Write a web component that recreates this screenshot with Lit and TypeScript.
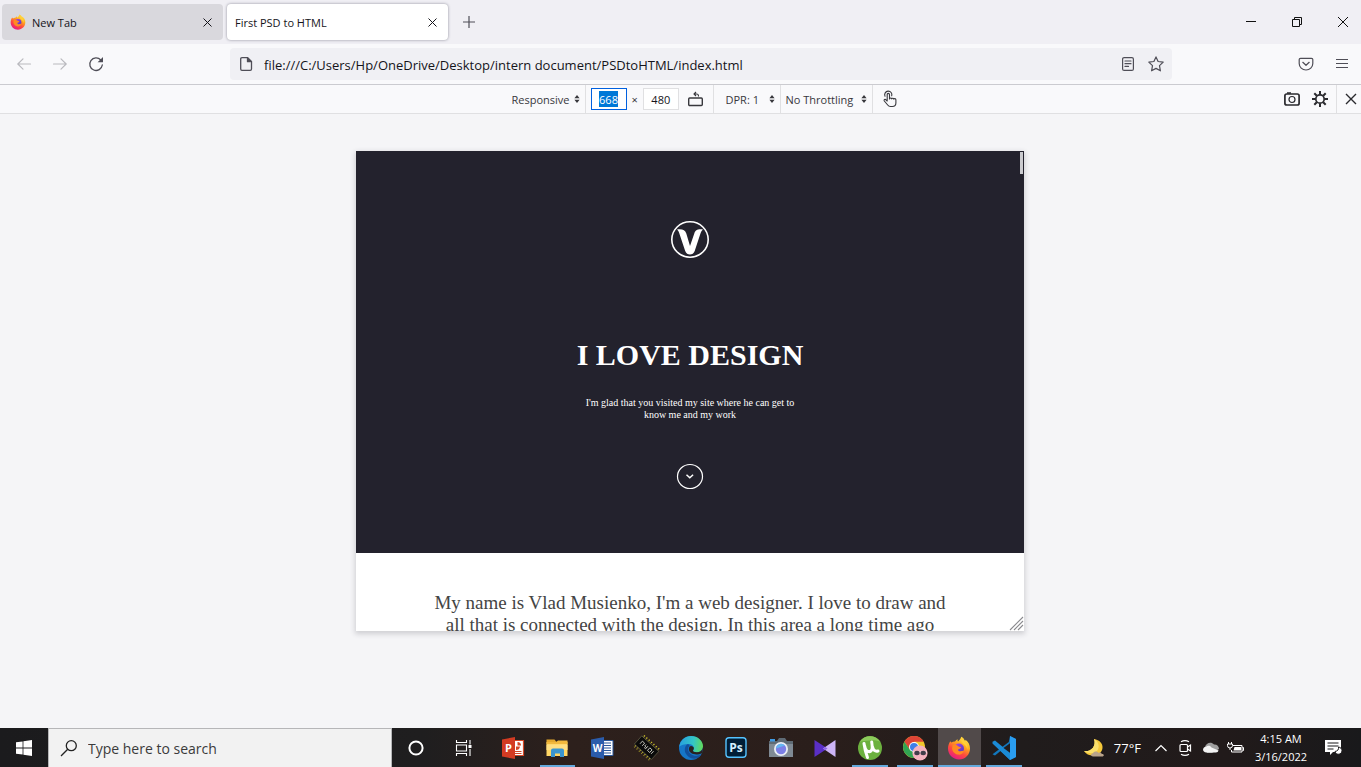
import { LitElement, html, css, svg } from "lit";
import { customElement } from "lit/decorators.js";
import { classMap } from "lit/directives/class-map.js";

const closeIcon = html`<svg width="9" height="9" viewBox="0 0 9 9" fill="none" stroke="currentColor" stroke-width="1" aria-hidden="true"><path d="M.5.5l8 8M8.500.5l-8 8"/></svg>`;
const arrows = html`<svg class="arrows" width="6" height="8" viewBox="0 0 6 8" fill="currentColor" aria-hidden="true"><path d="M3 0l2.600 3.200H.4zM3 8L.4 4.800h5.200z"/></svg>`;

const firefoxArt = svg`
  <defs>
    <linearGradient id="fx" x1=".8" y1="0" x2=".25" y2="1"><stop offset="0" stop-color="#fff14f"/><stop offset=".35" stop-color="#ffa91e"/><stop offset=".65" stop-color="#ff4a3d"/><stop offset="1" stop-color="#e3158c"/></linearGradient>
    <linearGradient id="fy" x1="0" y1="0" x2="1" y2="1"><stop offset="0" stop-color="#b043e8"/><stop offset="1" stop-color="#4b39b8"/></linearGradient>
  </defs>
  <path fill="url(#fx)" d="M3.2 5.2c.5.5.9 1 1.3 1.4C5.600 5.800 6.800 5.400 8 5.600 8.500 4.800 9.400 3.800 10.600 3.300 10.400 4.200 10.600 5 11 5.600 12.300 4.200 13.600 3 14.300.8c2 1.200 3 2.700 3.600 4.400.4-.3.6-.8.600-1.400C21.400 6 23 9 23 12.500 23 18.700 18.100 23.500 12 23.500S1 18.700 1 12.600C1 9.800 1.900 7.300 3.200 5.200z"/>
  <circle cx="12" cy="12.500" r="5" fill="url(#fy)"/>
  <path fill="#ff8a22" d="M5.600 9.300c1.600-1 3.900-.8 5.200.6.9.9 2.200.8 3.200 1-.2 1.500-1.700 1.800-2.700 2.300-.6.4-.2 1.600.9 2 2 .6 3.400-.8 4.600-.3-.7 2.500-3 4-5.500 3.700-3.500-.4-6-3.200-6.200-6.200z"/>
  <path fill="#ffcf3a" d="M14.300.8c2 1.200 3 2.700 3.600 4.400 2 2.300 3.100 5 2.500 8.500-.4-2.600-1.500-4.300-3.500-5.500-2.300-1.400-3.200-3.900-2.600-7.400z"/>`;

const apps = [
  { name: "PowerPoint", open: false, active: false, art: svg`
    <path fill="#fff" d="M12 4h11v16H12z"/><path fill="none" stroke="#d24726" stroke-width="1.200" d="M12 4.500h10.500v15H12"/><path fill="#d24726" d="M15 6.500v4h4a4 4 0 0 1-4 3.500zM16.500 6a3.500 3.500 0 0 1 3.500 3.500h-3.500zM14 15h6.500v1H14zM14 17h6.500v1H14z"/>
    <path fill="#d33b22" d="M1 3.500L14 1v22L1 20.500z"/><text x="7.500" y="16" text-anchor="middle" font-size="11" font-weight="700" fill="#fff">P</text>` },
  { name: "File Explorer", open: true, active: false, art: svg`
    <path fill="#e5a92e" d="M1.500 3.500h8l2 2.500h-10z"/><path fill="#ffd664" d="M1.500 6h21v14h-21z"/><path fill="#f2b93e" d="M1.500 6H11l2-1.500h9.500V8h-21z"/><path fill="#ffdf83" d="M1.500 8.500h21V14h-21z"/><path fill="#3a95cf" d="M6 21v-6.500q0-2 2-2h9q2 0 2 2V21h-4v-3.500h-5V21z"/>` },
  { name: "Word", open: false, active: false, art: svg`
    <path fill="#fff" stroke="#2b579a" stroke-width="1" d="M12 4.500h11v15H12z"/><path stroke="#2b579a" stroke-width="1.200" d="M14 7h7M14 9.500h7M14 12h7M14 14.500h7M14 17h7"/>
    <path fill="#2b5cab" d="M1 3.500L14 1v22L1 20.500z"/><text x="7.500" y="16" text-anchor="middle" font-size="10" font-weight="700" fill="#fff">W</text>` },
  { name: "Chip tool", open: false, active: false, art: svg`
    <g transform="rotate(42 12 12)"><path stroke="#c9c02a" stroke-width="1.200" stroke-dasharray="1.500 .7" d="M2 4v16M5.200 4v16M8.400 4v16M11.600 4v16M14.800 4v16M18 4v16M21.200 4v16"/><path fill="#0b0b0b" stroke="#6d6a50" stroke-width=".6" d="M0 6.500h23v11H0z"/><path fill="none" stroke="#c9c9c0" stroke-width=".9" d="M4 13.500V10h3v3.500M9 10v2h2.500M11.500 10v3.500H9.500M14 10h3v3.500h-3zM19 10v3.500"/></g>` },
  { name: "Edge", open: false, active: false, art: svg`
    <defs><linearGradient id="eg" x1="0" y1=".3" x2="1" y2=".4"><stop offset="0" stop-color="#279fe0"/><stop offset=".6" stop-color="#34c6c5"/><stop offset="1" stop-color="#61d95c"/></linearGradient></defs>
    <circle cx="12" cy="12" r="12" fill="#1676c8"/>
    <path fill="url(#eg)" d="M.2 11C1 4.600 6 0 12 0c7 0 12 5 12 10.300 0 3.500-2.700 6-6.200 6-2.800 0-4.200-1-3.700-2 .5-.8.8-1.500.7-2.600C14.600 9.400 12.400 8 9.600 8 5.500 8 1.500 9 .2 11z"/>
    <path fill="#12509d" d="M8.500 8.200C5.800 10 5 14 6.800 17.500c2 4 6.800 6.500 11.700 4.600 1.600-.7 3-2 4-3.500-4 2-9.500 1.400-12.300-2.200-1.700-2.300-1.500-5 .1-6.400.6-1-.4-2.100-1.800-1.800z"/>
    <path fill="#2a211f" d="M10.600 10.500c-1.500 2.200-.7 5 1.500 6.500 3.400 2.200 7.800 1.600 10.800.2l1.100 1.300-1 2.500L24 11c-.5 3.500-3 5.300-6.200 5.300-2.800 0-4.200-1-3.700-2 .5-.8.8-1.500.7-2.600-.6-1.500-3-2.400-4.200-1.200z"/>` },
  { name: "Photoshop", open: false, active: false, art: svg`
    <rect x="2" y="1.800" width="20" height="19.400" rx="3" fill="#001e36" stroke="#55c3ff" stroke-width="1.400"/><text x="12" y="16" text-anchor="middle" font-size="12" font-weight="700" fill="#d5efff">Ps</text>` },
  { name: "Camera", open: false, active: false, art: svg`
    <path fill="#5f6b75" d="M8 5l2-3h6l2 3h6v16H0V5z"/><path fill="#7f8a94" d="M0 8h24v13H0z"/><path fill="#3f9be4" d="M1 3h5v2.500H1z"/><circle cx="12" cy="13" r="7" fill="#e9eef5"/><circle cx="12" cy="13" r="5.200" fill="#7c7fe6"/><path fill="#65b7f1" d="M7 12.500a5.200 5.200 0 0 1 9-3z"/>` },
  { name: "Video editor", open: false, active: false, art: svg`
    <path fill="#5a2fc7" d="M1.500 4l13 8.500-13 8.500z"/><path fill="#cdb5f7" d="M22.500 4L10 12.500 22.500 21z"/><path fill="#8d63e6" d="M12.300 11l2.200 1.500-2.200 1.600-2.300-1.600z"/>` },
  { name: "Torrent client", open: true, active: false, art: svg`
    <circle cx="12" cy="12" r="12" fill="#6cb13f"/><path fill="#8ccb5b" d="M2 5.500A12 12 0 0 1 22 5.500C15 3 8 5 2 5.500z"/><path fill="none" stroke="#fff" stroke-width="3" stroke-linecap="round" d="M6 7.500c.5 4 2 10 3.500 14M6.500 9.500c.8 4.500 2.800 6.700 5.600 6 2.600-.8 2.600-3.800 1.600-9.500M14.600 11c.6 3 2.200 4.700 5.400 4"/>` },
  { name: "Chrome", open: true, active: false, art: svg`
    <circle cx="11" cy="11" r="11" fill="#f0c72c"/><path fill="#de4436" d="M1.400 5.700A11 11 0 0 1 20.700 5.800H11L6.600 13.600z"/><path fill="#31a452" d="M1.400 5.700A11 11 0 0 0 10.500 22l5-8.500-9-.2z"/><circle cx="11" cy="11" r="5" fill="#fff"/><circle cx="11" cy="11" r="4" fill="#3f7fe8"/>
    <circle cx="17" cy="17" r="7.600" fill="#f5b2bf"/><path fill="none" stroke="#fff" stroke-width=".8" d="M10 16h14"/><ellipse cx="14" cy="17" rx="2.700" ry="2.200" fill="#423d4a"/><ellipse cx="20.200" cy="17" rx="2.700" ry="2.200" fill="#423d4a"/>` },
  { name: "Firefox", open: true, active: true, art: firefoxArt },
  { name: "Visual Studio Code", open: true, active: false, art: svg`
    <path fill="#1277bd" d="M18 0l6 3v18l-6 3-9.500-9-5.500 4.500-2.500-1.300L16.800 6z"/><path fill="#2a9df0" d="M18 0l6 3v18l-6 3z"/><path fill="#1b8bd6" d="M.5 5.800L3 4.500 18 17v7L.5 7.500z"/><path fill="#211c1d" d="M18 7.200v9.600L11.500 12z"/>` },
];

@customElement("app-root")
export class AppRoot extends LitElement {
  static styles = css`
    :host { display: flex; flex-direction: column; min-height: 100vh; background: #f5f5f7; color: #15141a; font-family: "Open Sans", "Noto Sans", sans-serif; font-size: 12px; }
    * { box-sizing: border-box; }
    button, input, select { font: inherit; color: inherit; margin: 0; padding: 0; border: 0; background: none; border-radius: 0; }
    button { display: inline-flex; align-items: center; justify-content: center; flex: none; }
    svg { display: block; flex: none; overflow: visible; }
    .icon { color: #4f4e57; }

    .titlebar { display: flex; align-items: center; height: 44px; background: #f0eff4; padding-left: 2px; }
    .tab { display: flex; align-items: center; flex: 0 1 221px; height: 36px; padding: 0 7px 0 8px; border-radius: 4px; gap: 6px; background: #d9d8dd; margin-right: 4px; }
    .tab.current { background: #fff; box-shadow: 0 0 3px #8e8e9a; }
    .tab-name { flex: 1; white-space: nowrap; font-size: 11px; }
    .tab button, .new-tab { width: 18px; height: 20px; }
    .new-tab { margin-left: 8px; }
    .window-buttons { display: flex; margin-left: auto; }
    .window-buttons button { width: 46px; height: 44px; color: #111; }
    .window-buttons button:last-child { width: 36px; margin-left: 5px; }

    .navbar { display: flex; align-items: center; height: 41px; padding: 0 11px 0 14px; background: #f9f9fb; border-bottom: 1px solid #cbcbd0; }
    .history { display: flex; gap: 16px; flex: 0 0 216px; }
    .history button { width: 20px; height: 20px; }
    .history button:disabled { color: #b9b9be; }
    .address { display: flex; align-items: center; flex: 1; height: 32px; padding: 0 8px; background: #f0f0f4; border-radius: 4px; gap: 10px; }
    .address input { flex: 1; min-width: 0; outline: 0; font-size: 13px; padding-top: 2px; color: #15141a; }
    .address-tools { display: flex; gap: 12px; }
    .nav-tools { display: flex; gap: 20px; flex: 0 0 178px; justify-content: flex-end; }

    .device-bar { display: grid; grid-template-columns: calc(50% - 174px) auto 1fr; align-items: stretch; height: 29px; background: #f9f9fb; border-bottom: 1px solid #e0e0e2; font-size: 11px; color: #38383d; }
    .device-main { grid-column: 2; display: flex; align-items: stretch; }
    .cell { display: flex; align-items: center; padding: 0 5px; border-right: 1px solid #e0e0e2; }
    .cell.size { gap: 5px; width: 128px; }
    .cell.dpr { width: 67px; padding-left: 12px; justify-content: space-between; }
    .cell.network { width: 92px; justify-content: space-between; }
    .cell.touch { border: 0; width: 34px; justify-content: center; }
    .cell select { appearance: none; outline: 0; margin-right: 4px; }
    .size input { width: 36px; height: 22px; border: 1px solid #e0e0e2; text-align: center; background: #fff; outline: 0; color: #15141a; }
    .size .chosen { border: 1px solid #0060df; color: #fff; background: linear-gradient(#0078d7, #0078d7) center / 19px 16px no-repeat #fff; }
    .rotate { margin-left: 4px; }
    .device-tools { display: flex; align-items: center; justify-content: flex-end; color: #2a2a2e; }
    .device-tools button { width: 28px; height: 28px; }
    .device-tools button:last-child { border-left: 1px solid #e0e0e2; margin-left: 2px; padding-left: 4px; width: 25px; }

    .stage { flex: 1; display: flex; justify-content: center; align-items: flex-start; padding: 37px 0 37px 19px; }
    .viewport { position: relative; width: 668px; height: 480px; overflow: hidden; background: #fff; box-shadow: 0 2px 5px 1px #cfcfd3; font-family: "Liberation Serif", serif; }
    .hero { display: flex; flex-direction: column; align-items: center; height: 402px; padding-top: 69px; background: #23222d; color: #fff; text-align: center; }
    .hero h1 { margin: 78px 0 0; font-size: 30px; line-height: 36px; font-weight: 700; }
    .hero p { width: 220px; margin: 24px 0 0; font-size: 10px; line-height: 12px; }
    .down { margin-top: 42px; }
    .about { margin: 39px 76px 0; color: #444; font-size: 19px; line-height: 22px; font-weight: 400; text-align: center; }
    .thumb { position: absolute; top: 1px; right: 1px; width: 3px; height: 22px; background: #cbcbcf; }
    .grip { position: absolute; right: 1px; bottom: 1px; }

    .taskbar { display: flex; height: 39px; background: linear-gradient(90deg, #1b1b1d 0, #1f1e1f 31%, #2d201c 42%, #2a1e1b 60%, #201c1c 75%, #211a1a 90%, #19191b 100%); color: #fff; }
    .start { width: 48px; }
    .search { display: flex; align-items: center; gap: 11px; flex: 0 1 344px; padding: 0 12px; background: #f2f2f2; border: 1px solid #b6b6b8; border-bottom: 0; color: #222; }
    .search input { flex: 1; min-width: 0; font-size: 14px; outline: 0; }
    .search input::placeholder { color: #3b3b3b; opacity: 1; }
    .shell { width: 48px; }
    .apps { display: grid; grid-template-columns: repeat(12, 1fr); flex: 0 1 535px; margin-left: 3px; gap: 1px; }
    .app { position: relative; font-family: "Open Sans", sans-serif; }
    .app.active { background: #514a4a; }
    .app.open::after { content: ""; position: absolute; left: 4px; right: 4px; bottom: 0; height: 2px; background: #64a9dc; }
    .app.active::after { left: 0; right: 0; }
    .tray { display: flex; align-items: center; margin-left: auto; padding-right: 19px; }
    .weather { gap: 8px; font-size: 13px; margin-right: 14px; }
    .tray-icons { display: flex; align-items: center; gap: 8px; margin-right: 10px; }
    .clock { flex-direction: column; width: 54px; font-size: 11px; line-height: 18px; white-space: nowrap; margin-right: 17px; }
  `;

  render() {
    return html`
      <header class="titlebar">
        <div class="tab"><svg width="16" height="16" viewBox="0 0 24 24" aria-hidden="true">${firefoxArt}</svg><span class="tab-name">New Tab</span><button aria-label="Close New Tab">${closeIcon}</button></div>
        <div class="tab current"><span class="tab-name">First PSD to HTML</span><button aria-label="Close First PSD to HTML">${closeIcon}</button></div>
        <button class="new-tab icon" aria-label="New tab"><svg width="12" height="12" viewBox="0 0 12 12" stroke="currentColor" stroke-width="1.200"><path d="M6 0v12M0 6h12"/></svg></button>
        <div class="window-buttons">
          <button aria-label="Minimize"><svg width="10" height="10" viewBox="0 0 10 10" stroke="currentColor"><path d="M0 4.500h10"/></svg></button>
          <button aria-label="Restore"><svg width="10" height="10" viewBox="0 0 10 10" fill="none" stroke="currentColor"><path d="M.5 2.500h7v7h-7zM2.500 2.500v-2h7v7h-2"/></svg></button>
          <button aria-label="Close"><svg width="10" height="10" viewBox="0 0 10 10" stroke="currentColor"><path d="M0 0l10 10M10 0L0 10"/></svg></button>
        </div>
      </header>

      <nav class="navbar">
        <div class="history icon">
          <button disabled aria-label="Back"><svg width="14" height="12" viewBox="0 0 14 12" fill="none" stroke="currentColor" stroke-width="1.200" stroke-linecap="round"><path d="M13.500 6H1M6 .8L.8 6 6 11.200"/></svg></button>
          <button disabled aria-label="Forward"><svg width="14" height="12" viewBox="0 0 14 12" fill="none" stroke="currentColor" stroke-width="1.200" stroke-linecap="round"><path d="M.5 6H13M8 .8L13.200 6 8 11.200"/></svg></button>
          <button aria-label="Reload"><svg width="14" height="14" viewBox="0 0 14 14" fill="none" stroke="currentColor" stroke-width="1.300" stroke-linecap="round"><path d="M13.300 8A6.300 6.300 0 1 1 11.800 3"/><path fill="currentColor" stroke="none" d="M14 0v5.200H8.600z"/></svg></button>
        </div>
        <div class="address icon">
          <svg width="16" height="16" viewBox="0 0 16 16" fill="none" stroke="currentColor" stroke-width="1.300" stroke-linejoin="round"><path d="M4 1.700h5.500l4 4V13q0 1.300-1.300 1.300H4Q2.700 14.300 2.700 13V3Q2.700 1.700 4 1.700z"/><path fill="currentColor" d="M9.500 1.700v4h4z"/></svg>
          <input aria-label="Address" value="file:///C:/Users/Hp/OneDrive/Desktop/intern document/PSDtoHTML/index.html">
          <div class="address-tools">
            <button aria-label="Reader view"><svg width="16" height="16" viewBox="0 0 16 16" fill="none" stroke="currentColor" stroke-width="1.200" stroke-linecap="round"><rect x="2.600" y="1.600" width="10.800" height="12.800" rx="1.500"/><path d="M5 5h6M5 7.700h6M5 10.400h3.500"/></svg></button>
            <button aria-label="Bookmark"><svg width="16" height="16" viewBox="0 0 16 16" fill="none" stroke="currentColor" stroke-width="1.200" stroke-linejoin="round"><path d="M8 .9l2.100 4.600 5.100.6-3.700 3.500.9 5.200L8 12.400l-4.400 2.400.9-5.200L.8 6.100l5.100-.6z"/></svg></button>
          </div>
        </div>
        <div class="nav-tools icon">
          <button aria-label="Pocket"><svg width="16" height="16" viewBox="0 0 16 16" fill="none" stroke="currentColor" stroke-width="1.200" stroke-linecap="round" stroke-linejoin="round"><path d="M2.500 2.300h11q1.300 0 1.300 1.300v3.800a6.800 6.600 0 0 1-13.600 0V3.600q0-1.300 1.300-1.300zM4.800 6.300L8 9.300l3.200-3"/></svg></button>
          <button aria-label="Menu"><svg width="16" height="16" viewBox="0 0 16 16" stroke="currentColor" stroke-width="1"><path d="M2 3.500h12M2 7.500h12M2 11.500h12"/></svg></button>
        </div>
      </nav>

      <section class="device-bar" aria-label="Responsive design">
        <div class="device-main">
          <div class="cell"><select aria-label="Device"><option>Responsive</option></select>${arrows}</div>
          <div class="cell size">
            <input class="chosen" aria-label="Width" value="668"><span>×</span><input aria-label="Height" value="480">
            <button class="rotate" aria-label="Rotate"><svg width="15" height="14" viewBox="0 0 15 14" fill="none" stroke="currentColor" stroke-width="1.400"><rect x=".7" y="6" width="13.600" height="7.500" rx="1"/><path stroke-width="1.100" d="M10.500 4.500V4q0-2-2-2H6M8 0L6 2l2 2"/></svg></button>
          </div>
          <div class="cell dpr"><select aria-label="Device pixel ratio"><option>DPR: 1</option></select>${arrows}</div>
          <div class="cell network"><select aria-label="Network throttling"><option>No Throttling</option></select>${arrows}</div>
          <div class="cell touch"><button aria-label="Touch simulation"><svg width="14" height="16" viewBox="0 0 14 16" fill="none" stroke="currentColor" stroke-width="1.100" stroke-linejoin="round" stroke-linecap="round"><path d="M4.200 9.500V3.600q0-1.200 1.100-1.200t1.200 1.200V8q0-1 1-1t1.200 1q0-.8 1-.8t1.100 1q.1-.6 1-.6 1.100 0 1.100 1.200V12q0 3.500-3.600 3.500H7.500q-1.800 0-2.800-1.500L1.300 10q-.6-1 .2-1.500.8-.4 1.500.3l1.200 1.200M2 5.200A3.600 3.600 0 1 1 8.700 4.800"/></svg></button></div>
        </div>
        <div class="device-tools">
          <button aria-label="Screenshot"><svg width="16" height="14" viewBox="0 0 16 14" fill="none" stroke="currentColor" stroke-width="1.700"><rect x=".9" y="2" width="14.200" height="11" rx="1.800"/><path d="M3 1h4" stroke-width="1.500"/><circle cx="8" cy="7.500" r="3" stroke-width="1.200"/></svg></button>
          <button aria-label="Settings"><svg width="16" height="16" viewBox="0 0 16 16" fill="none" stroke="currentColor"><circle cx="8" cy="8" r="4.200" stroke-width="1.700"/><path stroke-width="2" d="M8 0v3.500M8 12.500V16M0 8h3.500M12.500 8H16M2.300 2.300l2.500 2.500M11.200 11.200l2.500 2.500M2.300 13.700l2.500-2.500M11.200 4.800l2.500-2.500"/></svg></button>
          <button aria-label="Close responsive design"><svg width="10" height="10" viewBox="0 0 10 10" stroke="currentColor" stroke-width="1.400"><path d="M0 0l10 10M10 0L0 10"/></svg></button>
        </div>
      </section>

      <main class="stage">
        <div class="viewport">
          <section class="hero">
            <svg width="40" height="39" viewBox="0 0 40 39" role="img" aria-label="V logo"><ellipse cx="20" cy="19.500" rx="18.200" ry="17.700" fill="none" stroke="#fff" stroke-width="1.600"/><path fill="#fff" d="M7 9.500C12.500 9 15 9.800 16.300 13.500L20 26l4.300-12.500C25.600 9.800 27.500 9 33 9.500c-1.600 1.400-2 2.600-2.700 4.600L24.700 31c-1.600 4.800-7.900 4.800-9.500 0L9.600 14.200C8.900 12.200 8.500 10.800 7 9.500z"/></svg>
            <h1>I LOVE DESIGN</h1>
            <p>I'm glad that you visited my site where he can get to know me and my work</p>
            <button class="down" aria-label="Scroll down"><svg width="28" height="27" viewBox="0 0 28 27" fill="none" stroke="#fff"><ellipse cx="14" cy="13.500" rx="12.500" ry="12" stroke-width="1.200"/><path stroke-width="1.500" d="M10.500 11.800l3.300 3 3.300-3"/></svg></button>
          </section>
          <p class="about">My name is Vlad Musienko, I'm a web designer. I love to draw and all that is connected with the design. In this area a long time ago</p>
          <div class="thumb"></div>
          <svg class="grip" width="13" height="13" viewBox="0 0 13 13" stroke="#8a8a8e" stroke-width="1.100"><path d="M0 13L13 0M4 13l9-9M8 13l5-5"/></svg>
        </div>
      </main>

      <footer class="taskbar">
        <button class="start" aria-label="Start"><svg width="16" height="16" viewBox="0 0 16 16" fill="#fff"><path d="M0 2.300L6.600 1.400v6.200H0zM7.400 1.300L16 0v7.600H7.400zM0 8.400h6.600v6.200L0 13.700zM7.400 8.400H16V16l-8.600-1.200z"/></svg></button>
        <label class="search"><svg width="16" height="16" viewBox="0 0 16 16" fill="none" stroke="currentColor" stroke-width="1.300"><circle cx="10.300" cy="5.700" r="5"/><path d="M6.700 9.300L0 16"/></svg><input aria-label="Search" placeholder="Type here to search"></label>
        <button class="shell" aria-label="Cortana"><svg width="16" height="16" viewBox="0 0 16 16"><circle cx="8" cy="8" r="6.600" fill="none" stroke="#fff" stroke-width="2"/></svg></button>
        <button class="shell" aria-label="Task view"><svg width="16" height="16" viewBox="0 0 16 16" fill="none" stroke="#fff" stroke-width="1.100"><path d="M.5 0v2.500h10V0M.5 5h10v6H.5zM.5 16v-2.500h10V16M14 0v4.500M14 9v7"/><path fill="#fff" stroke="none" d="M12.500 5h3v3h-3z"/></svg></button>
        <div class="apps">${apps.map(a => html`<button class=${classMap({ app: true, open: a.open, active: a.active })} aria-label=${a.name}><svg width="24" height="24" viewBox="0 0 24 24">${a.art}</svg></button>`)}</div>
        <div class="tray">
          <button class="weather"><svg width="22" height="20" viewBox="0 0 22 20"><path fill="#f5c83a" d="M10 1c5.500 1 9 4.500 8.500 9-.5 4.800-5 7.500-9.500 7.500-4 0-7-1.500-9-4.500C7 14 12.500 8.500 10 1z"/><path fill="#fbe06c" d="M10 1c5 3 6 8 3 12-3 3-8 3-13 0C7 14 12.500 8.500 10 1z"/><path fill="#b9a38b" d="M9 18.500c-2.500 0-2.500-3 0-3.200.8-2.300 4.500-2.500 5.500-.3 1.500-1 3.300 0 3.200 1 2.800-.2 2.800 2.500.3 2.500z"/></svg>77°F</button>
          <div class="tray-icons">
            <button aria-label="Hidden icons"><svg width="12" height="8" viewBox="0 0 12 8" fill="none" stroke="#fff" stroke-width="1.200"><path d="M.5 7L6 1.500 11.500 7"/></svg></button>
            <button aria-label="Meet now"><svg width="20" height="16" viewBox="0 0 20 16" fill="none" stroke="#fff" stroke-width="1.200"><rect x="5" y="4.500" width="7.500" height="7" rx="1"/><path d="M12.500 7l3-2v6l-3-2M6 1.800q4-2.300 8 0M6 14.200q4 2.300 8 0"/></svg></button>
            <button aria-label="OneDrive"><svg width="16" height="11" viewBox="0 0 16 11"><path fill="#9f9f9f" d="M2 5C3 1 8-1 11 2.500c3-.2 5 2 5 4.500L9 11H4z"/><path fill="#f3f3f3" d="M3.500 10.500C-1 10.500-1 5 3 4.800 5 3 7.500 3.700 8.500 5.500L15.600 8.600q-.6 1.900-2.600 1.900z"/></svg></button>
            <button aria-label="Battery"><svg width="17" height="14" viewBox="0 0 17 14" fill="none" stroke="#fff" stroke-width="1"><path d="M6 4.500h9v6.500H4.500V9M15.500 6.500h1v3h-1M1.500 1v2M4.500 1v2M.5 3h5v1.500Q5.500 7 3 7T.5 4.500zM3 7v2"/><path fill="#fff" stroke="none" d="M7.500 6H14v3.500H6.500z"/></svg></button>
          </div>
          <button class="clock"><span>4:15 AM</span><span>3/16/2022</span></button>
          <button aria-label="Notifications"><svg width="17" height="17" viewBox="0 0 17 17"><path fill="#fff" d="M0 1h16v12H8l-3 3v-3H0z"/><path stroke="#1b1a1c" stroke-width="1.100" d="M2.500 4h11M2.500 7h11M2.500 10h6"/><path fill="#fff" stroke="#1b1a1c" stroke-width="1" d="M13.500 8c.5 2.500-.8 4-3.500 4.500 1 4 6.800 3.500 7-.8 0-1.800-1.500-3.400-3.500-3.700z"/></svg></button>
        </div>
      </footer>`;
  }
}
